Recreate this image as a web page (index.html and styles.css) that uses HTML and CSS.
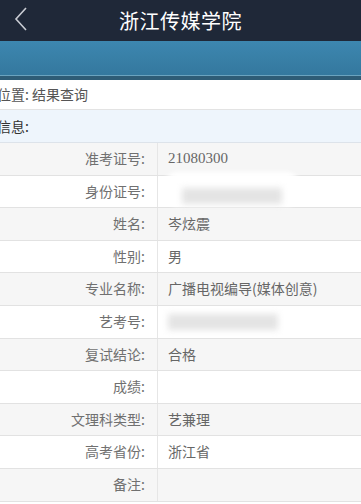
FILE: index.html
```html
<!DOCTYPE html>
<html lang="zh-CN">
<head>
    <meta charset="UTF-8">
    <meta name="viewport" content="width=device-width, initial-scale=1.0">
    <title>浙江传媒学院</title>
    <link rel="stylesheet" href="styles.css">
</head>
<body>
    <div class="top-bar">
        <span class="back">
            <svg width="14" height="24" viewBox="0 0 14 24"><path d="M12 1 L2 12 L12 23" fill="none" stroke="#c9ccd3" stroke-width="1.6"/></svg>
        </span>
        <h1>浙江传媒学院</h1>
    </div>
    <div class="banner"></div>

    <div class="crumb"><span class="shift">当前位置: 结果查询</span></div>
    <div class="section-title"><span class="shift">考生信息:</span></div>

    <ul class="info-table">
        <li class="odd"><span class="label">准考证号:</span><span class="value num">21080300</span></li>
        <li><span class="label">身份证号:</span><span class="value"><span class="blob"></span><span class="blur wide"></span></span></li>
        <li class="odd"><span class="label">姓名:</span><span class="value">岑炫震</span></li>
        <li><span class="label">性别:</span><span class="value">男</span></li>
        <li class="odd"><span class="label">专业名称:</span><span class="value">广播电视编导(媒体创意)</span></li>
        <li><span class="label">艺考号:</span><span class="value"><span class="blur"></span></span></li>
        <li class="odd"><span class="label">复试结论:</span><span class="value">合格</span></li>
        <li><span class="label">成绩:</span><span class="value"></span></li>
        <li class="odd"><span class="label">文理科类型:</span><span class="value">艺兼理</span></li>
        <li><span class="label">高考省份:</span><span class="value">浙江省</span></li>
        <li class="odd"><span class="label">备注:</span><span class="value"></span></li>
    </ul>
</body>
</html>
```

FILE: styles.css
```css
body {
    margin: 0;
    padding: 0;
    background: #fff;
    font-family: "Noto Sans CJK SC", "Noto Sans", sans-serif;
    color: #666;
    overflow: hidden;
}
.top-bar {
    height: 41px;
    background: #1f2838;
    display: flex;
    align-items: center;
    justify-content: center;
    position: relative;
}
.top-bar h1 {
    margin: 0;
    font-size: 20px;
    font-weight: normal;
    color: #fff;
    letter-spacing: 0.5px;
}
.back {
    position: absolute;
    left: 14px;
    top: 7px;
}
.banner {
    height: 34px;
    background: linear-gradient(#3d87b0, #34789e);
    border-bottom: 1px solid #6aa3bf;
    box-shadow: 0 4px 0 #2e5c76;
    margin-bottom: 4px;
}
.crumb {
    height: 29px;
    line-height: 29px;
    font-size: 14px;
    color: #555;
    border-bottom: 1px solid #e3e3e3;
    white-space: nowrap;
}
.shift {
    margin-left: -31px;
}
.section-title {
    height: 32px;
    line-height: 32px;
    font-size: 14px;
    color: #333;
    background: #eef5fc;
    border-bottom: 1px solid #dde3ea;
    white-space: nowrap;
}
.info-table {
    list-style: none;
    margin: 0;
    padding: 0;
}
.info-table li {
    display: flex;
    height: 31.6px;
    border-bottom: 1px solid #e2e2e2;
    font-size: 14px;
    background: #fff;
}
.info-table li.odd {
    background: #f6f6f6;
}
.label {
    width: 145px;
    padding-right: 12px;
    text-align: right;
    border-right: 1px solid #e6e6e6;
    line-height: 31.6px;
    color: #707070;
}
.value {
    flex: 1;
    padding-left: 10px;
    line-height: 31.6px;
    color: #666;
    position: relative;
}
.value.num {
    font-family: "Liberation Serif", serif;
    font-size: 15px;
}
.blob {
    position: absolute;
    left: 4px;
    top: -4px;
    width: 140px;
    height: 34px;
    border-radius: 16px;
    background: #fff;
    filter: blur(2px);
}
.blur {
    position: absolute;
    left: 10px;
    top: 8px;
    width: 110px;
    height: 16px;
    background: #e4e4e4;
    filter: blur(3px);
}
.blur.wide {
    left: 24px;
    top: 12px;
    width: 100px;
}
```
